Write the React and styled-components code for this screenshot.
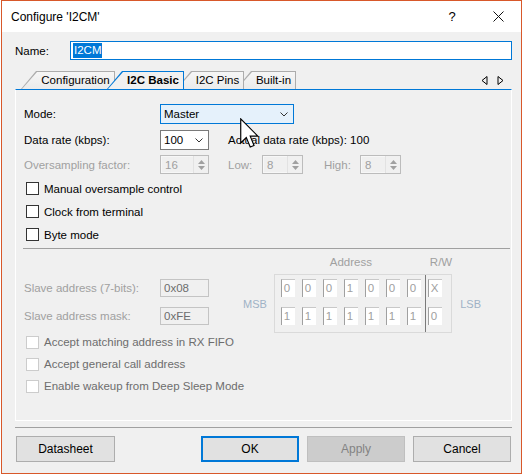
import React from 'react'
import styled, { createGlobalStyle } from 'styled-components'

const GlobalStyle = createGlobalStyle`
  body {
    margin: 0;
    background: #ffffff;
    font-family: "Liberation Sans", Arial, sans-serif;
  }
`

const Page = styled.div`
  position: relative;
  width: 523px;
  height: 475px;
`

const Window = styled.div`
  margin-left: 1px;
  width: 521px;
  height: 474px;
  box-sizing: border-box;
  border: 1px solid #d8582a;
  background: #f0f0f0;
  display: flex;
  flex-direction: column;
`

const TitleBar = styled.div`
  height: 31px;
  flex: none;
  background: #ffffff;
  display: flex;
  align-items: center;
  padding-left: 9px;
  font-size: 12px;
  color: #000;
`

const TitleText = styled.div`
  flex: 1;
`

const TitleButton = styled.div`
  width: 46px;
  height: 31px;
  display: flex;
  align-items: center;
  justify-content: center;
  font-size: 13px;
  color: #000;
`

const Body = styled.div`
  flex: 1;
  display: flex;
  flex-direction: column;
  padding: 9px 9px 0 13px;
  font-size: 11.5px;
`

const NameRow = styled.div`
  display: flex;
  align-items: center;
  height: 19px;
`

const NameLabel = styled.div`
  width: 55px;
  margin-left: -1px;
  padding-left: 1px;
`

const NameInput = styled.div`
  flex: 1;
  height: 19px;
  box-sizing: border-box;
  border: 1px solid #0078d7;
  background: #fff;
  display: flex;
  align-items: center;
  padding-left: 2px;
`

const Selected = styled.span`
  background: #0078d7;
  color: #fff;
  line-height: 15px;
  padding: 0 1px;
`

const TabStrip = styled.div`
  margin-top: 11px;
  height: 18px;
  display: flex;
  align-items: flex-end;
  padding-left: 6px;
`

const Tab = styled.div`
  position: relative;
  z-index: ${p => p.$z};
  width: ${p => p.$w}px;
  margin-left: ${p => (p.$first ? 0 : -8)}px;
  height: 18px;
  box-sizing: border-box;
  padding: 1px 1px 0 1px;
  background: ${p => (p.$active ? '#0078d7' : '#acacac')};
  clip-path: polygon(0 100%, 15px 0, 100% 0, 100% 100%);
`

const TabFace = styled.div`
  height: 100%;
  box-sizing: border-box;
  padding-left: 15px;
  text-align: center;
  line-height: 17px;
  background: ${p => (p.$active ? '#f0f0f0' : 'linear-gradient(#f6f6f6, #ebebeb)')};
  font-weight: ${p => (p.$active ? 700 : 400)};
  clip-path: polygon(0 100%, 15px 0, 100% 0, 100% 100%);
`

const TabArrows = styled.div`
  margin-left: auto;
  margin-right: 8px;
  align-self: center;
  display: flex;
  gap: 9px;
`

const Pane = styled.div`
  height: 332px;
  box-sizing: border-box;
  border: 1px solid #ffffff;
  border-top-color: #0078d7;
  padding: 14px 2px 0 8px;
  display: flex;
  flex-direction: column;
`

const Row = styled.div`
  display: flex;
  align-items: center;
  height: ${p => p.$h || 20}px;
  margin-top: ${p => p.$mt || 0}px;
`

const Label = styled.div`
  width: ${p => p.$w || 136}px;
  flex: none;
  margin-left: ${p => p.$ml || 0}px;
  color: ${p => (p.$disabled ? '#a0a0a0' : '#000')};
  white-space: nowrap;
`

const Text = styled.div`
  margin-left: ${p => p.$ml || 0}px;
  white-space: nowrap;
`

const Combo = styled.div`
  width: ${p => p.$w}px;
  height: ${p => p.$h || 20}px;
  box-sizing: border-box;
  border: 1px solid ${p => (p.$focus ? '#0078d7' : '#7a7a7a')};
  background: ${p => (p.$focus ? '#e5f1fb' : '#ffffff')};
  display: flex;
  align-items: center;
  padding: 0 5px 0 3px;
`

const ComboValue = styled.div`
  flex: 1;
`

const Spinner = styled.div`
  width: ${p => p.$w}px;
  height: 19px;
  box-sizing: border-box;
  border: 1px solid #bcbcbc;
  background: #f0f0f0;
  display: flex;
`

const SpinValue = styled.div`
  flex: 1;
  color: #a0a0a0;
  padding-left: 3px;
  line-height: 17px;
  border: 1px solid #f7f7f7;
  border-right: none;
`

const SpinButtons = styled.div`
  width: 14px;
  display: flex;
  flex-direction: column;
  align-items: center;
  justify-content: center;
  gap: 2px;
  border-left: 1px solid #e2e2e2;
`

const CheckGroup = styled.div`
  margin-top: ${p => p.$mt}px;
  display: flex;
  flex-direction: column;
`

const CheckRow = styled.label`
  display: flex;
  align-items: center;
  height: ${p => p.$h || 23}px;
  padding-left: 2px;
  color: ${p => (p.$disabled ? '#6d6d6d' : '#000')};
`

const Box = styled.span`
  width: 13px;
  height: 13px;
  box-sizing: border-box;
  border: 1px solid ${p => (p.$disabled ? '#cccccc' : '#333333')};
  background: #ffffff;
  margin-right: 5px;
  flex: none;
`

const Separator = styled.div`
  margin: 2px -1px 0 -1px;
  height: 1px;
  background: #a0a0a0;
  flex: none;
`

const AddrSection = styled.div`
  display: flex;
  align-items: flex-start;
`

const SlaveCol = styled.div`
  display: flex;
  flex-direction: column;
  gap: 10px;
  padding-top: 30px;
`

const ReadOnly = styled.div`
  width: 49px;
  height: 18px;
  box-sizing: border-box;
  border: 1px solid #c4c4c4;
  background: #f0f0f0;
  color: #6d6d6d;
  padding-left: 3px;
  line-height: 16px;
`

const EdgeLabel = styled.div`
  margin-top: 25px;
  margin-left: ${p => p.$ml}px;
  height: 59px;
  display: flex;
  align-items: center;
  color: #9fb2c6;
  font-size: 11px;
`

const BitColumn = styled.div`
  display: flex;
  flex-direction: column;
  margin-left: 7px;
`

const BitHeader = styled.div`
  height: 25px;
  line-height: 26px;
  display: flex;
  color: #a0a0a0;
`

const AddressTitle = styled.div`
  width: 154px;
  text-align: center;
`

const RWTitle = styled.div`
  margin-left: 2px;
`

const BitBox = styled.div`
  height: 59px;
  box-sizing: border-box;
  border: 1px solid #dadada;
  display: flex;
  padding: 0 6px;
`

const BitGrid = styled.div`
  display: grid;
  grid-template-columns: repeat(${p => p.$cols}, 14px);
  grid-auto-rows: 18px;
  column-gap: 7px;
  row-gap: 10px;
  padding-top: 4px;
`

const BitDivider = styled.div`
  width: 1px;
  background: #7a7a7a;
  margin: 0 2px 0 4px;
`

const Bit = styled.div`
  box-sizing: border-box;
  background: #ffffff;
  border-left: 1px solid #a0a0a0;
  border-top: 1px solid #c8c8c8;
  color: #a0a0a0;
  padding-left: 2px;
  line-height: 17px;
`

const FooterLine = styled.div`
  margin-top: 6px;
  height: 1px;
  background: #a0a0a0;
  flex: none;
`

const Footer = styled.div`
  margin-top: 8px;
  height: 26px;
  display: flex;
  gap: 8px;
  padding: 0 1px;
`

const Button = styled.div`
  width: ${p => p.$w || 98}px;
  height: 26px;
  box-sizing: border-box;
  border: ${p => (p.$default ? '2px solid #0078d7' : p.$disabled ? '1px solid #bfbfbf' : '1px solid #adadad')};
  background: ${p => (p.$disabled ? '#cccccc' : '#e1e1e1')};
  color: ${p => (p.$disabled ? '#838383' : '#000')};
  display: flex;
  align-items: center;
  justify-content: center;
  font-size: 12px;
  margin-left: ${p => (p.$push ? 'auto' : '0')};
`

const Cursor = styled.svg`
  position: absolute;
  left: 240px;
  top: 118px;
`

const Chevron = () => (
  <svg width="8" height="5" viewBox="0 0 8 5">
    <path d="M0.5 0.5 L4 4 L7.5 0.5" fill="none" stroke="#333" strokeWidth="1" />
  </svg>
)

const SpinArrows = () => (
  <>
    <svg width="7" height="4" viewBox="0 0 7 4"><path d="M0 4 L3.5 0 L7 4 Z" fill="#a0a0a0" /></svg>
    <svg width="7" height="4" viewBox="0 0 7 4"><path d="M0 0 L3.5 4 L7 0 Z" fill="#a0a0a0" /></svg>
  </>
)

const Spin = ({ value, w }) => (
  <Spinner $w={w}>
    <SpinValue>{value}</SpinValue>
    <SpinButtons><SpinArrows /></SpinButtons>
  </Spinner>
)

const Check = ({ children, disabled, h }) => (
  <CheckRow $disabled={disabled} $h={h}>
    <Box $disabled={disabled} />
    {children}
  </CheckRow>
)

const tabs = [
  { label: 'Configuration', w: 94 },
  { label: 'I2C Basic', w: 77, active: true },
  { label: 'I2C Pins', w: 68 },
  { label: 'Built-in', w: 60 },
]

const addressBits = ['0', '0', '0', '1', '0', '0', '0']
const maskBits = ['1', '1', '1', '1', '1', '1', '1']

export default function App() {
  return (
    <Page>
      <GlobalStyle />
      <Window>
        <TitleBar>
          <TitleText>Configure 'I2CM'</TitleText>
          <TitleButton>?</TitleButton>
          <TitleButton>
            <svg width="11" height="11" viewBox="0 0 11 11">
              <path d="M0.5 0.5 L10.5 10.5 M10.5 0.5 L0.5 10.5" stroke="#111" strokeWidth="1" />
            </svg>
          </TitleButton>
        </TitleBar>
        <Body>
          <NameRow>
            <NameLabel>Name:</NameLabel>
            <NameInput><Selected>I2CM</Selected></NameInput>
          </NameRow>
          <TabStrip>
            {tabs.map((t, i) => (
              <Tab key={t.label} $w={t.w} $first={i === 0} $active={t.active} $z={t.active ? 10 : 9 - i}>
                <TabFace $active={t.active}>{t.label}</TabFace>
              </Tab>
            ))}
            <TabArrows>
              <svg width="7" height="9" viewBox="0 0 7 9">
                <path d="M6 0.5 L1 4.5 L6 8.5 Z" fill="none" stroke="#000" strokeWidth="1" />
              </svg>
              <svg width="7" height="9" viewBox="0 0 7 9">
                <path d="M1 0.5 L6 4.5 L1 8.5 Z" fill="none" stroke="#000" strokeWidth="1" />
              </svg>
            </TabArrows>
          </TabStrip>
          <Pane>
            <Row>
              <Label>Mode:</Label>
              <Combo $w={134} $focus>
                <ComboValue>Master</ComboValue>
                <Chevron />
              </Combo>
            </Row>
            <Row $mt={6} $h={20}>
              <Label>Data rate (kbps):</Label>
              <Combo $w={49}>
                <ComboValue>100</ComboValue>
                <Chevron />
              </Combo>
              <Text $ml={19}>Actual data rate (kbps): 100</Text>
            </Row>
            <Row $mt={5} $h={19}>
              <Label $disabled>Oversampling factor:</Label>
              <Spin value="16" w={49} />
              <Label $disabled $w={34} $ml={19}>Low:</Label>
              <Spin value="8" w={41} />
              <Label $disabled $w={36} $ml={21}>High:</Label>
              <Spin value="8" w={41} />
            </Row>
            <CheckGroup $mt={3}>
              <Check>Manual oversample control</Check>
              <Check>Clock from terminal</Check>
              <Check>Byte mode</Check>
            </CheckGroup>
            <Separator />
            <AddrSection>
              <SlaveCol>
                <Row $h={18}>
                  <Label $disabled>Slave address (7-bits):</Label>
                  <ReadOnly>0x08</ReadOnly>
                </Row>
                <Row $h={18}>
                  <Label $disabled>Slave address mask:</Label>
                  <ReadOnly>0xFE</ReadOnly>
                </Row>
              </SlaveCol>
              <EdgeLabel $ml={34}>MSB</EdgeLabel>
              <BitColumn>
                <BitHeader>
                  <AddressTitle>Address</AddressTitle>
                  <RWTitle>R/W</RWTitle>
                </BitHeader>
                <BitBox>
                  <BitGrid $cols={7}>
                    {addressBits.map((b, i) => <Bit key={'a' + i}>{b}</Bit>)}
                    {maskBits.map((b, i) => <Bit key={'m' + i}>{b}</Bit>)}
                  </BitGrid>
                  <BitDivider />
                  <BitGrid $cols={1}>
                    <Bit>X</Bit>
                    <Bit>0</Bit>
                  </BitGrid>
                </BitBox>
              </BitColumn>
              <EdgeLabel $ml={8}>LSB</EdgeLabel>
            </AddrSection>
            <CheckGroup $mt={-2}>
              <Check disabled h={22}>Accept matching address in RX FIFO</Check>
              <Check disabled h={22}>Accept general call address</Check>
              <Check disabled h={22}>Enable wakeup from Deep Sleep Mode</Check>
            </CheckGroup>
          </Pane>
          <FooterLine />
          <Footer>
            <Button $w={99}>Datasheet</Button>
            <Button $push $default>OK</Button>
            <Button $disabled>Apply</Button>
            <Button>Cancel</Button>
          </Footer>
        </Body>
      </Window>
      <Cursor width="19" height="31" viewBox="0 0 13 21">
        <path d="M0.5 0.5 L0.5 17 L4.3 13.3 L7 19.8 L9.6 18.7 L7 12.3 L12.2 12.3 Z" fill="#fff" stroke="#000" strokeWidth="0.8" strokeLinejoin="miter" />
      </Cursor>
    </Page>
  )
}
